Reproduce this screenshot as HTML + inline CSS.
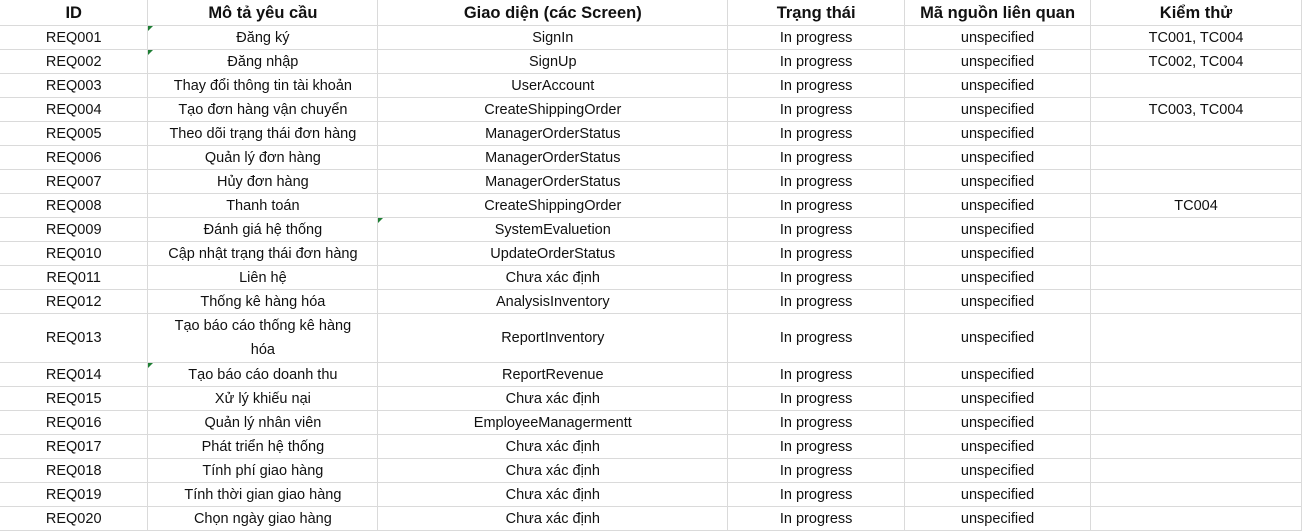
<!DOCTYPE html><html><head><meta charset="utf-8"><style>
body{margin:0;background:#fff;width:1302px;height:528px;overflow:hidden}
table{border-collapse:collapse;table-layout:fixed;font-family:"Liberation Sans","DejaVu Sans",sans-serif;font-size:14.5px;color:#111}
td{border-right:1px solid #dadada;border-bottom:1px solid #dadada;text-align:center;padding:2px 0 0 0;height:21px;line-height:21px;position:relative;white-space:nowrap;overflow:visible}
tr.h td{font-weight:bold;font-size:16.5px;height:22px;line-height:24px;padding-top:1px}
tr.d td{height:47px;line-height:24px;white-space:normal;padding-top:0}
.g::before{content:"";position:absolute;left:0;top:0;border-top:5px solid #1e7e34;border-right:5px solid transparent}
</style></head><body><table>
<colgroup><col style="width:148px"><col style="width:230px"><col style="width:350px"><col style="width:177px"><col style="width:186px"><col style="width:211px"></colgroup>
<tr class="h"><td>ID</td><td>Mô tả yêu cầu</td><td>Giao diện (các Screen)</td><td>Trạng thái</td><td>Mã nguồn liên quan</td><td>Kiểm thử</td></tr>
<tr><td>REQ001</td><td class="g">Đăng ký</td><td>SignIn</td><td>In progress</td><td>unspecified</td><td>TC001, TC004</td></tr>
<tr><td>REQ002</td><td class="g">Đăng nhập</td><td>SignUp</td><td>In progress</td><td>unspecified</td><td>TC002, TC004</td></tr>
<tr><td>REQ003</td><td>Thay đổi thông tin tài khoản</td><td>UserAccount</td><td>In progress</td><td>unspecified</td><td></td></tr>
<tr><td>REQ004</td><td>Tạo đơn hàng vận chuyển</td><td>CreateShippingOrder</td><td>In progress</td><td>unspecified</td><td>TC003, TC004</td></tr>
<tr><td>REQ005</td><td>Theo dõi trạng thái đơn hàng</td><td>ManagerOrderStatus</td><td>In progress</td><td>unspecified</td><td></td></tr>
<tr><td>REQ006</td><td>Quản lý đơn hàng</td><td>ManagerOrderStatus</td><td>In progress</td><td>unspecified</td><td></td></tr>
<tr><td>REQ007</td><td>Hủy đơn hàng</td><td>ManagerOrderStatus</td><td>In progress</td><td>unspecified</td><td></td></tr>
<tr><td>REQ008</td><td>Thanh toán</td><td>CreateShippingOrder</td><td>In progress</td><td>unspecified</td><td>TC004</td></tr>
<tr><td>REQ009</td><td>Đánh giá hệ thống</td><td class="g">SystemEvaluetion</td><td>In progress</td><td>unspecified</td><td></td></tr>
<tr><td>REQ010</td><td>Cập nhật trạng thái đơn hàng</td><td>UpdateOrderStatus</td><td>In progress</td><td>unspecified</td><td></td></tr>
<tr><td>REQ011</td><td>Liên hệ</td><td>Chưa xác định</td><td>In progress</td><td>unspecified</td><td></td></tr>
<tr><td>REQ012</td><td>Thống kê hàng hóa</td><td>AnalysisInventory</td><td>In progress</td><td>unspecified</td><td></td></tr>
<tr class="d"><td>REQ013</td><td>Tạo báo cáo thống kê hàng<br>hóa</td><td>ReportInventory</td><td>In progress</td><td>unspecified</td><td></td></tr>
<tr><td>REQ014</td><td class="g">Tạo báo cáo doanh thu</td><td>ReportRevenue</td><td>In progress</td><td>unspecified</td><td></td></tr>
<tr><td>REQ015</td><td>Xử lý khiếu nại</td><td>Chưa xác định</td><td>In progress</td><td>unspecified</td><td></td></tr>
<tr><td>REQ016</td><td>Quản lý nhân viên</td><td>EmployeeManagermentt</td><td>In progress</td><td>unspecified</td><td></td></tr>
<tr><td>REQ017</td><td>Phát triển hệ thống</td><td>Chưa xác định</td><td>In progress</td><td>unspecified</td><td></td></tr>
<tr><td>REQ018</td><td>Tính phí giao hàng</td><td>Chưa xác định</td><td>In progress</td><td>unspecified</td><td></td></tr>
<tr><td>REQ019</td><td>Tính thời gian giao hàng</td><td>Chưa xác định</td><td>In progress</td><td>unspecified</td><td></td></tr>
<tr><td>REQ020</td><td>Chọn ngày giao hàng</td><td>Chưa xác định</td><td>In progress</td><td>unspecified</td><td></td></tr>
</table></body></html>
